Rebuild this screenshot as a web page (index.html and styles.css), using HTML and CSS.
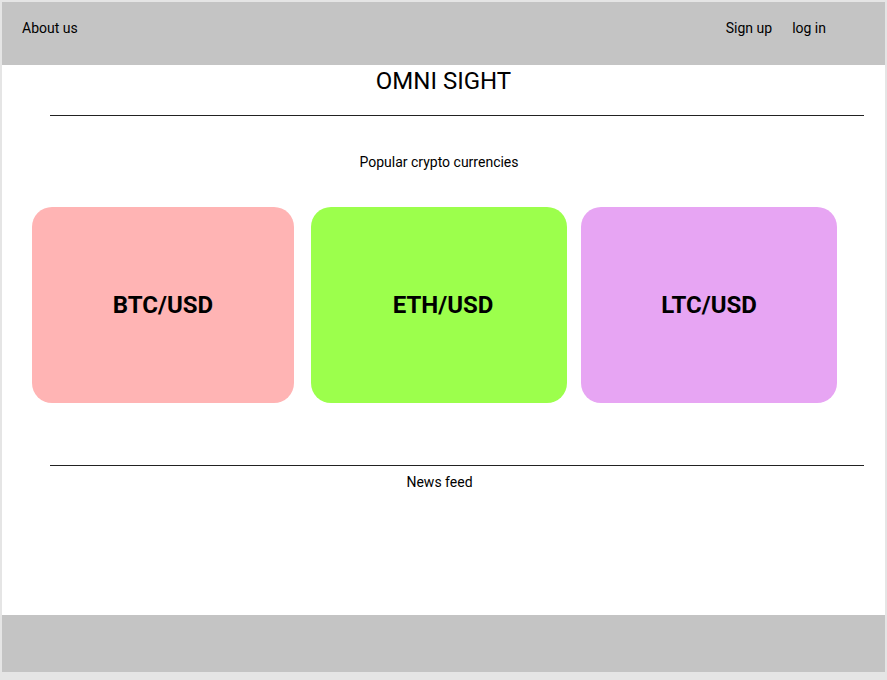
FILE: index.html
```html
<!DOCTYPE html>
<html lang="en">
<head>
<meta charset="utf-8">
<title>Omni Sight</title>
<link rel="stylesheet" href="styles.css">
</head>
<body>
<div class="page">
  <header class="topbar">
    <a class="nav-link" href="#">About us</a>
    <nav class="auth">
      <a class="nav-link" href="#">Sign up</a>
      <a class="nav-link" href="#">log in</a>
    </nav>
  </header>
  <main class="content">
    <h1 class="title">OMNI SIGHT</h1>
    <hr class="divider divider-top">
    <p class="section-label popular">Popular crypto currencies</p>
    <div class="cards">
      <div class="card card-btc">BTC/USD</div>
      <div class="card card-eth">ETH/USD</div>
      <div class="card card-ltc">LTC/USD</div>
    </div>
    <hr class="divider divider-news">
    <p class="section-label news">News feed</p>
  </main>
  <footer class="bottombar"></footer>
</div>
</body>
</html>
```
FILE: styles.css
```css
* { box-sizing: border-box; }
html, body { margin: 0; padding: 0; }
body {
  background: #e5e5e5;
  font-family: Roboto, "Liberation Sans", sans-serif;
  color: #000;
}
.page {
  width: 883px;
  height: 670px;
  margin: 2px 0 0 2px;
  background: #fff;
  display: flex;
  flex-direction: column;
}
.topbar {
  height: 63px;
  flex: none;
  background: #c4c4c4;
  display: flex;
  justify-content: space-between;
  align-items: flex-start;
  padding: 15px 59px 0 20px;
}
.nav-link {
  color: #000;
  text-decoration: none;
  font-size: 14px;
  line-height: 16px;
  padding-top: 3px;
}
.auth { display: flex; gap: 20px; }
.content {
  flex: 1;
  display: flex;
  flex-direction: column;
}
.title {
  margin: 2px 0 0;
  font-size: 24px;
  font-weight: 400;
  line-height: 28px;
  text-align: center;
}
.divider {
  margin: 0 0 0 48px;
  width: 814px;
  border: 0;
  border-top: 1px solid #222;
  height: 0;
}
.divider-top { margin-top: 20px; }
.section-label {
  margin: 0;
  font-size: 14px;
  line-height: 16px;
  text-align: center;
}
.popular { margin-top: 38px; padding-right: 9px; }
.cards {
  display: flex;
  margin: 37px 0 0 30px;
}
.card {
  height: 196px;
  border-radius: 20px;
  display: flex;
  align-items: center;
  justify-content: center;
  font-size: 24px;
  font-weight: 700;
}
.card-btc { width: 262px; background: #ffb4b4; }
.card-eth { width: 256px; margin-left: 17px; padding-left: 8px; background: #9cff4c; }
.card-ltc { width: 256px; margin-left: 14px; background: #e7a5f3; }
.divider-news { margin-top: 62px; }
.news { margin-top: 8px; padding-right: 8px; }
.bottombar {
  height: 57px;
  flex: none;
  background: #c4c4c4;
}
```
